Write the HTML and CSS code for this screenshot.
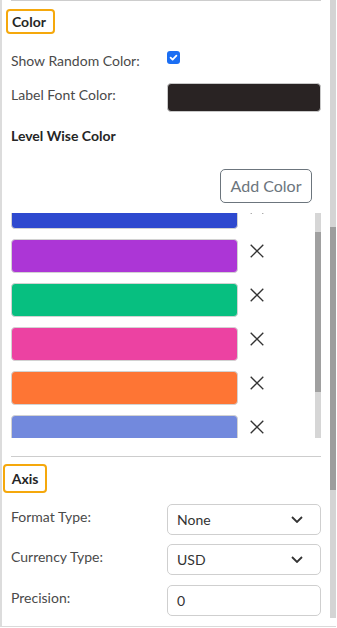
FILE: index.html
```html
<!DOCTYPE html>
<html>
<head>
    <title>Chart Properties</title>
    <link rel="stylesheet" href="styles.css">
</head>
<body>
    <div class="panel">
        <div class="content">
            <div class="divider"></div>

            <div class="section-title title-color">Color</div>

            <div class="row row-check">
                <span class="label">Show Random Color:</span>
                <span class="checkbox">
                    <svg width="13" height="13" viewBox="0 0 13 13">
                        <rect width="13" height="13" rx="3" fill="#1b6ef3"/>
                        <path d="M3.6 6.7 L5.6 8.6 L9.4 4.6" fill="none" stroke="#fff" stroke-width="1.8" stroke-linecap="round" stroke-linejoin="round"/>
                    </svg>
                </span>
            </div>

            <div class="row row-font">
                <span class="label">Label Font Color:</span>
                <span class="color-input"></span>
            </div>

            <div class="subtitle">Level Wise Color</div>

            <div class="add-row">
                <button class="btn-outline">Add Color</button>
            </div>

            <div class="level-list">
                <div class="level-items">
                    <div class="level-item">
                        <span class="swatch c-blue"></span>
                        <svg class="remove" viewBox="0 0 14 14"><path d="M0.7 0.7 L13.3 13.3 M13.3 0.7 L0.7 13.3"/></svg>
                    </div>
                    <div class="level-item">
                        <span class="swatch c-purple"></span>
                        <svg class="remove" viewBox="0 0 14 14"><path d="M0.7 0.7 L13.3 13.3 M13.3 0.7 L0.7 13.3"/></svg>
                    </div>
                    <div class="level-item">
                        <span class="swatch c-green"></span>
                        <svg class="remove" viewBox="0 0 14 14"><path d="M0.7 0.7 L13.3 13.3 M13.3 0.7 L0.7 13.3"/></svg>
                    </div>
                    <div class="level-item">
                        <span class="swatch c-pink"></span>
                        <svg class="remove" viewBox="0 0 14 14"><path d="M0.7 0.7 L13.3 13.3 M13.3 0.7 L0.7 13.3"/></svg>
                    </div>
                    <div class="level-item">
                        <span class="swatch c-orange"></span>
                        <svg class="remove" viewBox="0 0 14 14"><path d="M0.7 0.7 L13.3 13.3 M13.3 0.7 L0.7 13.3"/></svg>
                    </div>
                    <div class="level-item">
                        <span class="swatch c-lilac"></span>
                        <svg class="remove" viewBox="0 0 14 14"><path d="M0.7 0.7 L13.3 13.3 M13.3 0.7 L0.7 13.3"/></svg>
                    </div>
                </div>
                <div class="list-scroll"><div class="list-thumb"></div></div>
            </div>

            <div class="divider divider-axis"></div>

            <div class="section-title title-axis">Axis</div>

            <div class="field">
                <span class="label">Format Type:</span>
                <div class="select">
                    <span>None</span>
                    <svg class="chevron" viewBox="0 0 12 7"><path d="M1 1 L6 6 L11 1"/></svg>
                </div>
            </div>
            <div class="field">
                <span class="label">Currency Type:</span>
                <div class="select">
                    <span>USD</span>
                    <svg class="chevron" viewBox="0 0 12 7"><path d="M1 1 L6 6 L11 1"/></svg>
                </div>
            </div>
            <div class="field">
                <span class="label">Precision:</span>
                <div class="select">
                    <span>0</span>
                </div>
            </div>
        </div>

        <div class="scroll"><div class="scroll-thumb"></div></div>
    </div>
</body>
</html>
```

FILE: styles.css
```css
* {
    box-sizing: border-box;
    margin: 0;
    padding: 0;
}

body {
    font-family: "Lato", "Noto Sans", sans-serif;
    background-color: #fff;
    color: #4a4a4a;
}

.panel {
    display: flex;
    width: 336px;
    height: 627px;
    border-left: 2px solid #dcdcdc;
    border-bottom: 1px solid #dadada;
}

.content {
    flex: 1;
    padding: 0 9px;
    overflow: hidden;
}

.divider {
    height: 1px;
    background-color: #cdcdcd;
}

.section-title {
    display: inline-flex;
    align-items: center;
    font-size: 14px;
    font-weight: bold;
    color: #262626;
    border: 2px solid #f5a80c;
    border-radius: 4px;
}

.title-color {
    height: 25px;
    margin-top: 8px;
    margin-left: -5px;
    padding: 0 7px 0 4px;
}

.title-axis {
    height: 29px;
    margin-top: 7px;
    margin-left: -8.3px;
    padding: 0 7px 0 7px;
}

.row {
    display: flex;
    align-items: flex-start;
}

.label {
    flex: 0 0 156px;
    font-size: 14px;
    line-height: 20px;
    color: #4a4a4a;
}

.row-check {
    margin-top: 17px;
}

.checkbox {
    display: flex;
    margin-left: -0.5px;
}

.row-font {
    margin-top: 12px;
}

.row-font .label {
    margin-top: 1.5px;
}

.color-input {
    flex: 1;
    height: 29px;
    background-color: #292323;
    border: 1px solid #c9c9c9;
    border-radius: 4px;
}

.subtitle {
    margin-top: 14.3px;
    font-size: 14px;
    line-height: 20px;
    font-weight: bold;
    color: #262626;
}

.add-row {
    display: flex;
    justify-content: flex-end;
    margin-top: 22.7px;
    padding-right: 9px;
}

.btn-outline {
    width: 92px;
    height: 34px;
    font-family: inherit;
    font-size: 16px;
    color: #6c757d;
    background: #fff;
    border: 1px solid #6c757d;
    border-radius: 5px;
}

.level-list {
    display: flex;
    justify-content: space-between;
    height: 225px;
    margin-top: 10px;
    overflow: hidden;
}

.level-items {
    display: flex;
    flex-direction: column;
    gap: 10px;
    margin-top: -18px;
}

.level-item {
    display: flex;
    align-items: flex-start;
    gap: 12px;
}

.swatch {
    width: 227px;
    height: 34px;
    border: 1px solid #d2d2d2;
    border-radius: 4px;
}

.c-blue { background-color: #2e49cf; }
.c-purple { background-color: #ac36d6; }
.c-green { background-color: #07bf80; }
.c-pink { background-color: #ec42a2; }
.c-orange { background-color: #fe7534; }
.c-lilac { background-color: #7289dd; }

.remove {
    width: 14px;
    height: 14px;
    margin-top: 5px;
    fill: none;
    stroke: #333;
    stroke-width: 1.3;
}

.list-scroll {
    width: 6px;
    background-color: #d6d6d6;
}

.list-thumb {
    height: 160px;
    margin-top: 19px;
    background-color: #a0a0a0;
}

.divider-axis {
    margin-top: 18px;
}

.field {
    display: flex;
    align-items: flex-start;
    margin-top: 9.5px;
}

.title-axis + .field {
    margin-top: 11px;
}

.field .label {
    margin-top: 3px;
}

.select {
    flex: 1;
    display: flex;
    align-items: center;
    justify-content: space-between;
    height: 31px;
    padding: 0 17px 0 9px;
    font-size: 14px;
    color: #333;
    border: 1px solid #cfcfcf;
    border-radius: 5px;
}

.chevron {
    width: 12px;
    height: 7px;
    fill: none;
    stroke: #333;
    stroke-width: 1.8;
}

.scroll {
    width: 6px;
    height: 618px;
    background-color: #d4d4d4;
}

.scroll-thumb {
    height: 263px;
    margin-top: 227px;
    background-color: #9d9d9d;
}
```
